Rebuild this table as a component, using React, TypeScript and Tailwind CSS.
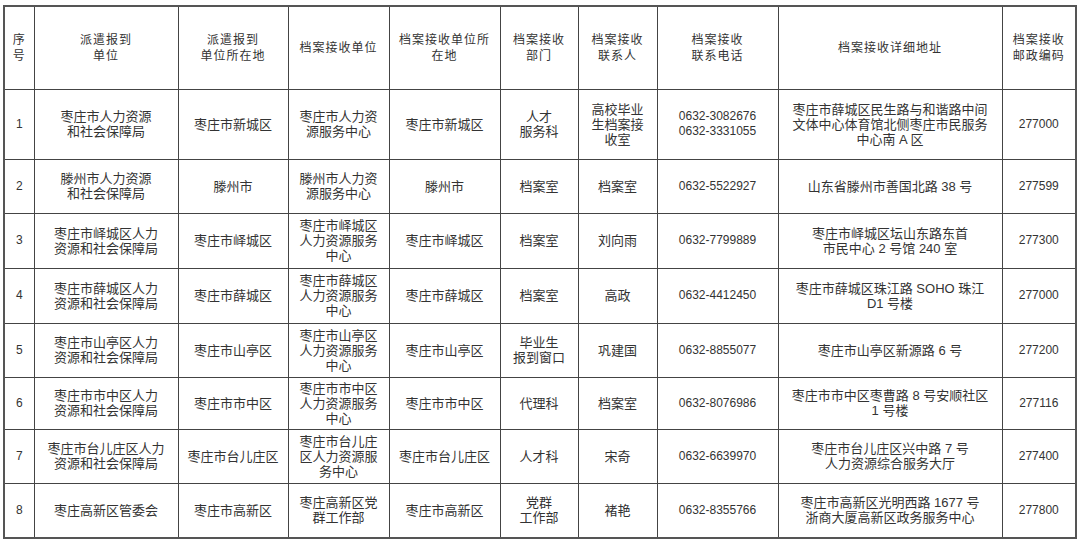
const headers = [
  "序\n号",
  "派遣报到\n单位",
  "派遣报到\n单位所在地",
  "档案接收单位",
  "档案接收单位所\n在地",
  "档案接收\n部门",
  "档案接收\n联系人",
  "档案接收\n联系电话",
  "档案接收详细地址",
  "档案接收\n邮政编码",
];

const rows: string[][] = [
  [
    "1",
    "枣庄市人力资源\n和社会保障局",
    "枣庄市新城区",
    "枣庄市人力资\n源服务中心",
    "枣庄市新城区",
    "人才\n服务科",
    "高校毕业\n生档案接\n收室",
    "0632-3082676\n0632-3331055",
    "枣庄市薛城区民生路与和谐路中间\n文体中心体育馆北侧枣庄市民服务\n中心南 A 区",
    "277000",
  ],
  [
    "2",
    "滕州市人力资源\n和社会保障局",
    "滕州市",
    "滕州市人力资\n源服务中心",
    "滕州市",
    "档案室",
    "档案室",
    "0632-5522927",
    "山东省滕州市善国北路 38 号",
    "277599",
  ],
  [
    "3",
    "枣庄市峄城区人力\n资源和社会保障局",
    "枣庄市峄城区",
    "枣庄市峄城区\n人力资源服务\n中心",
    "枣庄市峄城区",
    "档案室",
    "刘向雨",
    "0632-7799889",
    "枣庄市峄城区坛山东路东首\n市民中心 2 号馆 240 室",
    "277300",
  ],
  [
    "4",
    "枣庄市薛城区人力\n资源和社会保障局",
    "枣庄市薛城区",
    "枣庄市薛城区\n人力资源服务\n中心",
    "枣庄市薛城区",
    "档案室",
    "高政",
    "0632-4412450",
    "枣庄市薛城区珠江路 SOHO 珠江\nD1 号楼",
    "277000",
  ],
  [
    "5",
    "枣庄市山亭区人力\n资源和社会保障局",
    "枣庄市山亭区",
    "枣庄市山亭区\n人力资源服务\n中心",
    "枣庄市山亭区",
    "毕业生\n报到窗口",
    "巩建国",
    "0632-8855077",
    "枣庄市山亭区新源路 6 号",
    "277200",
  ],
  [
    "6",
    "枣庄市市中区人力\n资源和社会保障局",
    "枣庄市市中区",
    "枣庄市市中区\n人力资源服务\n中心",
    "枣庄市市中区",
    "代理科",
    "档案室",
    "0632-8076986",
    "枣庄市市中区枣曹路 8 号安顺社区\n1 号楼",
    "277116",
  ],
  [
    "7",
    "枣庄市台儿庄区人力\n资源和社会保障局",
    "枣庄市台儿庄区",
    "枣庄市台儿庄\n区人力资源服\n务中心",
    "枣庄市台儿庄区",
    "人才科",
    "宋奇",
    "0632-6639970",
    "枣庄市台儿庄区兴中路 7 号\n人力资源综合服务大厅",
    "277400",
  ],
  [
    "8",
    "枣庄高新区管委会",
    "枣庄市高新区",
    "枣庄高新区党\n群工作部",
    "枣庄市高新区",
    "党群\n工作部",
    "褚艳",
    "0632-8355766",
    "枣庄市高新区光明西路 1677 号\n浙商大厦高新区政务服务中心",
    "277800",
  ],
];

const rowHeights = [
  "h-[70px]",
  "h-[54px]",
  "h-[55px]",
  "h-[55px]",
  "h-[54px]",
  "h-[52px]",
  "h-[54px]",
  "h-[55px]",
];

const App = () => {
  return (
    <div className="min-h-screen w-full bg-white pl-[3px] pt-[5px] font-['Liberation_Sans','Noto_Sans_CJK_SC',sans-serif] text-[#333]">
      <table className="table-fixed border-collapse border-2 border-[#555]">
        <colgroup>
          <col className="w-[30px]" />
          <col className="w-[144px]" />
          <col className="w-[110px]" />
          <col className="w-[101px]" />
          <col className="w-[111px]" />
          <col className="w-[78px]" />
          <col className="w-[79px]" />
          <col className="w-[121px]" />
          <col className="w-[224px]" />
          <col className="w-[74px]" />
        </colgroup>
        <thead>
          <tr className="h-[83px]">
            {headers.map((h, i) => (
              <th
                key={i}
                className="border border-[#444] p-0 text-center align-middle text-[12px] font-normal leading-[16px] tracking-[1px] whitespace-pre-line"
              >
                {h}
              </th>
            ))}
          </tr>
        </thead>
        <tbody>
          {rows.map((row, r) => (
            <tr key={r} className={rowHeights[r]}>
              {row.map((cell, c) => (
                <td
                  key={c}
                  className={`border border-[#444] p-0 text-center align-middle whitespace-pre-line ${
                    c === 0 || c === 7 || c === 9
                      ? "text-[12px] leading-[15px]"
                      : "text-[13px] leading-[15px]"
                  }`}
                >
                  {cell}
                </td>
              ))}
            </tr>
          ))}
        </tbody>
      </table>
    </div>
  );
};

export default App;
